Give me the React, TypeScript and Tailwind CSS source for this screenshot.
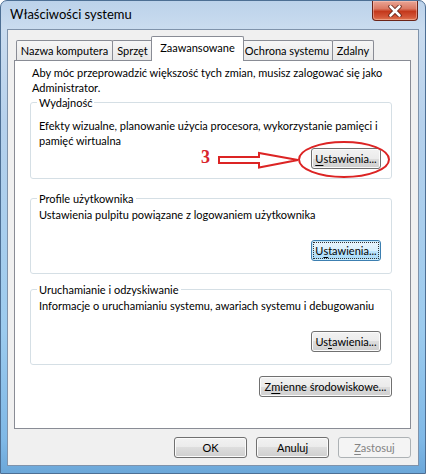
import React from 'react';

const font = { fontFamily: 'Lato, "Liberation Sans", Arial, sans-serif' };

interface BtnProps {
  label: string;
  hot?: number;
  width: string;
  focused?: boolean;
  disabled?: boolean;
}

// Win7-style push button, `hot` is the index of the underlined accelerator letter
const Btn: React.FC<BtnProps> = ({ label, hot, width, focused, disabled }) => {
  const text =
    hot === undefined ? (
      label
    ) : (
      <>
        {label.slice(0, hot)}
        <span className="underline underline-offset-[2px]">{label[hot]}</span>
        {label.slice(hot + 1)}
      </>
    );

  let skin =
    'border-[#707070] bg-[linear-gradient(#f2f2f2,#ebebeb_50%,#dddddd_50%,#cfcfcf)] shadow-[inset_0_0_0_1px_#fbfbfb] text-black';
  if (focused)
    skin =
      'border-[#3c7fb1] bg-[linear-gradient(#eaf6fd,#d9f0fc_50%,#bee6fd_50%,#a7d9f5)] shadow-[inset_0_0_0_1px_#c8ebfb] text-black';
  if (disabled) skin = 'border-[#adb2b5] bg-[#f4f4f4] text-[#838383]';

  return (
    <div
      className={`${width} h-[21px] shrink-0 rounded-[3px] border ${skin} flex items-center justify-center p-[2px]`}
    >
      <div
        className={`w-full h-full flex items-center justify-center whitespace-nowrap text-[11px] leading-[15px] ${
          focused ? 'outline outline-1 outline-dotted outline-[#333]' : ''
        }`}
      >
        {text}
      </div>
    </div>
  );
};

const tabs = [
  { label: 'Nazwa komputera', w: 'w-[97px]' },
  { label: 'Sprzęt', w: 'w-[41px]' },
  { label: 'Zaawansowane', w: 'w-[93px]', active: true },
  { label: 'Ochrona systemu', w: 'w-[92px]' },
  { label: 'Zdalny', w: 'w-[42px]' },
];

interface GroupProps {
  title: string;
  className?: string;
  children: React.ReactNode;
}

const Group: React.FC<GroupProps> = ({ title, className, children }) => (
  <fieldset className={`border border-[#d5dfe5] rounded-[3px] px-[8px] ${className ?? ''}`}>
    <legend className="-ml-[2px] px-[2px] text-[11px] leading-[15px]">{title}</legend>
    {children}
  </fieldset>
);

export default function App() {
  return (
    <div
      className="relative w-[426px] h-[474px] rounded-t-[7px] border border-[#4d6f94] bg-[linear-gradient(180deg,#bcd2ea_0px,#cadcef_28px,#b6d1ec_120px,#9ccbee_330px,#7fb8e6_440px,#6aa6d8_474px)] flex flex-col px-[6px] pb-[7px] text-black select-none overflow-hidden"
      style={font}
    >
      {/* title bar */}
      <div className="h-[28px] flex items-start justify-between">
        <div className="h-full flex items-center pl-[3px] text-[13px] text-black">Właściwości systemu</div>
        <div className="mr-[1px] w-[46px] h-[20px] rounded-b-[4px] border border-t-0 border-[#6b2418] bg-[linear-gradient(#e9a595,#db7a64_40%,#c4391c_55%,#d4583a_85%,#e07a52)] shadow-[inset_0_0_0_1px_rgba(255,210,200,0.45)] flex items-center justify-center">
          <svg width="14" height="12" viewBox="0 0 14 12">
            <path d="M2.5 1.5 L11.5 10.5 M11.5 1.5 L2.5 10.5" stroke="#5a1a10" strokeWidth="4.2" strokeLinecap="round" />
            <path d="M2.5 1.5 L11.5 10.5 M11.5 1.5 L2.5 10.5" stroke="#ffffff" strokeWidth="2.6" strokeLinecap="round" />
          </svg>
        </div>
      </div>

      {/* client area */}
      <div className="flex-1 border border-[#7f93ab] bg-[#f0f0f0] flex flex-col pl-[6px] pr-[7px] pt-[6px] pb-[6px]">
        {/* tab strip */}
        <div className="flex items-end pl-[2px] h-[24px] relative z-10">
          {tabs.map((t, i) =>
            t.active ? (
              <div
                key={t.label}
                className={`${t.w} -mx-[2px] h-[25px] -mb-[1px] border border-b-0 border-[#898c95] rounded-t-[2px] bg-white flex items-start justify-center pt-[3px] text-[11px] leading-[15px] whitespace-nowrap relative z-10`}
              >
                {t.label}
              </div>
            ) : (
              <div
                key={t.label}
                className={`${t.w} h-[20px] border border-b-0 ${
                  i > 0 ? '-ml-[1px]' : ''
                } border-[#898c95] rounded-t-[2px] bg-[linear-gradient(#f6f6f6,#e8e8e8)] flex items-center justify-center text-[11px] leading-[15px] whitespace-nowrap`}
              >
                {t.label}
              </div>
            )
          )}
        </div>

        {/* tab page */}
        <div className="h-[369px] border border-[#898c95] bg-white pl-[15px] pr-[18px] pt-[4px] flex flex-col">
          <p className="pl-[2px] text-[11px] leading-[15px]">
            Aby móc przeprowadzić większość tych zmian, musisz zalogować się jako Administrator.
          </p>

          <Group title="Wydajność" className="mt-[0px] pb-[9px]">
            <p className="mt-[8px] text-[11px] leading-[15px]">
              Efekty wizualne, planowanie użycia procesora, wykorzystanie pamięci i pamięć wirtualna
            </p>
            <div className="flex justify-end pr-[2px]">
              <Btn label="Ustawienia..." hot={0} width="w-[70px]" />
            </div>
          </Group>

          <Group title="Profile użytkownika" className="mt-[12px] pb-[12px]">
            <p className="mt-[1px] text-[11px] leading-[15px]">
              Ustawienia pulpitu powiązane z logowaniem użytkownika
            </p>
            <div className="flex justify-end pr-[2px] mt-[18px]">
              <Btn label="Ustawienia..." hot={1} width="w-[70px]" focused />
            </div>
          </Group>

          <Group title="Uruchamianie i odzyskiwanie" className="mt-[8px] pb-[12px]">
            <p className="mt-[1px] text-[11px] leading-[15px]">
              Informacje o uruchamianiu systemu, awariach systemu i debugowaniu
            </p>
            <div className="flex justify-end pr-[2px] mt-[18px]">
              <Btn label="Ustawienia..." hot={2} width="w-[70px]" />
            </div>
          </Group>

          <div className="flex justify-end mt-[11px]">
            <Btn label="Zmienne środowiskowe..." hot={1} width="w-[133px]" />
          </div>
        </div>

        {/* dialog buttons */}
        <div className="mt-[8px] flex justify-end gap-[9px]">
          <Btn label="OK" width="w-[73px]" />
          <Btn label="Anuluj" width="w-[73px]" />
          <Btn label="Zastosuj" hot={0} width="w-[73px]" disabled />
        </div>
      </div>

      {/* red marker drawn over the performance box */}
      <div className="absolute left-0 top-0 w-[426px] h-[474px] pointer-events-none">
        <svg width="426" height="474" viewBox="0 0 426 474" className="absolute left-0 top-0">
          <ellipse cx="343" cy="158.5" rx="45" ry="17.5" fill="none" stroke="#dc2424" strokeWidth="2" />
          <path
            d="M218 156 L258 156 L258 152 L297 159 L258 166.5 L258 162 L218 162 Z"
            fill="none"
            stroke="#dc2424"
            strokeWidth="2"
            strokeLinejoin="miter"
          />
        </svg>
        <span
          className="absolute left-[200px] top-[146px] text-[18px] leading-[20px] font-bold text-[#d9242b]"
          style={{ fontFamily: '"Liberation Serif", "Times New Roman", serif' }}
        >
          3
        </span>
      </div>
    </div>
  );
}
